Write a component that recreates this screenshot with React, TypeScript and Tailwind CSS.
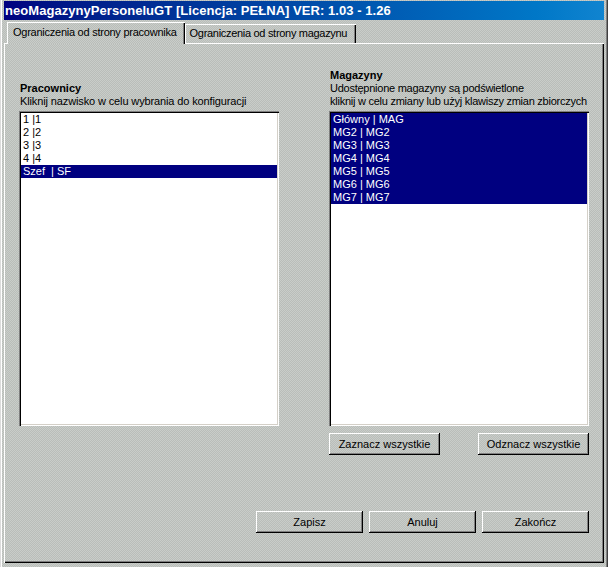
import React from 'react';

const pracownicy = ['1 |1', '2 |2', '3 |3', '4 |4', 'Szef  | SF'];
const magazyny = ['Główny | MAG', 'MG2 | MG2', 'MG3 | MG3', 'MG4 | MG4', 'MG5 | MG5', 'MG6 | MG6', 'MG7 | MG7'];

const btn =
  'h-[22px] flex items-center justify-center bg-transparent whitespace-nowrap shadow-[inset_-1px_-1px_#000,inset_1px_1px_#fff,inset_-2px_-2px_#808080]';

const App: React.FC = () => {
  return (
    <div className="w-[608px] h-[567px] overflow-hidden flex flex-col font-['Liberation_Sans',Arial,sans-serif] text-[11px] leading-[13px] text-black bg-[image:repeating-conic-gradient(#b9bdb9_0_25%,#c9cdc9_0_50%)] bg-[length:2px_2px] shadow-[inset_1px_0_#dcdcdc,inset_2px_0_#fff,inset_-1px_0_#404040,inset_-2px_0_#808080] px-[4px] pt-[1px]">
      {/* Title */}
      <div className="h-[19px] shrink-0 flex items-center pl-[1px] bg-linear-to-r from-[#000080] to-[#1084d0] text-white font-bold text-[13px] tracking-[0.05px] whitespace-nowrap">
        neoMagazynyPersoneluGT [Licencja: PEŁNA] VER: 1.03 - 1.26
      </div>

      {/* Tabs */}
      <div className="h-[23px] shrink-0 flex items-end pl-[3px]">
        <div className="relative z-10 h-[22px] -mb-[1px] pl-[6px] pr-[8px] pt-[4px] bg-[image:repeating-conic-gradient(#b9bdb9_0_25%,#c9cdc9_0_50%)] bg-[length:2px_2px] shadow-[inset_1px_0_#fff,inset_0_1px_#fff,inset_-1px_0_#000,inset_-2px_0_#808080] whitespace-nowrap tracking-[-0.25px]">
          Ograniczenia od strony pracownika
        </div>
        <div className="h-[19px] pl-[5px] pr-[9px] pt-[3px] shadow-[inset_1px_0_#fff,inset_0_1px_#fff,inset_-1px_0_#000,inset_-2px_0_#808080] whitespace-nowrap tracking-[-0.3px]">
          Ograniczenia od strony magazynu
        </div>
      </div>

      {/* Panel */}
      <div className="flex-1 mb-[4px] flex flex-col px-[15px] pt-[29px] shadow-[inset_1px_1px_#fff,inset_-1px_-1px_#000,inset_-2px_-2px_#808080]">
        <div className="flex gap-[50px]">
          <div className="w-[260px] flex flex-col">
            <div className="h-[39px] flex flex-col justify-end pb-[3px] whitespace-nowrap">
              <div className="font-bold pl-[1px]">Pracownicy</div>
              <div className="pl-[1px] tracking-[-0.125px]">Kliknij nazwisko w celu wybrania do konfiguracji</div>
            </div>
            <div className="h-[315px] bg-white p-[2px] shadow-[inset_1px_1px_#808080,inset_2px_2px_#000,inset_-1px_-1px_#fff,inset_-2px_-2px_#d4d0c8]">
              {pracownicy.map((p, i) => (
                <div
                  key={p}
                  className={`h-[13px] pl-[2px] whitespace-pre ${i === 4 ? 'bg-[#000080] text-white' : ''}`}
                >
                  {p}
                </div>
              ))}
            </div>
          </div>

          <div className="w-[260px] flex flex-col">
            <div className="h-[39px] flex flex-col justify-end pb-[3px] whitespace-nowrap">
              <div className="font-bold pl-[1px]">Magazyny</div>
              <div className="pl-[1px] tracking-[-0.25px]">Udostępnione magazyny są podświetlone</div>
              <div className="pl-[1px] tracking-[-0.25px]">kliknij w celu zmiany lub użyj klawiszy zmian zbiorczych</div>
            </div>
            <div className="h-[315px] bg-white p-[2px] shadow-[inset_1px_1px_#808080,inset_2px_2px_#000,inset_-1px_-1px_#fff,inset_-2px_-2px_#d4d0c8]">
              {magazyny.map((m) => (
                <div key={m} className="h-[13px] pl-[2px] bg-[#000080] text-white whitespace-pre">
                  {m}
                </div>
              ))}
            </div>
            <div className="flex justify-between mt-[7px]">
              <button className={`${btn} w-[111px]`}>Zaznacz wszystkie</button>
              <button className={`${btn} w-[111px]`}>Odznacz wszystkie</button>
            </div>
          </div>
        </div>

        <div className="flex justify-end gap-[6px] mt-[56px]">
          <button className={`${btn} w-[107px]`}>Zapisz</button>
          <button className={`${btn} w-[107px]`}>Anuluj</button>
          <button className={`${btn} w-[107px]`}>Zakończ</button>
        </div>
      </div>
    </div>
  );
};

export default App;
